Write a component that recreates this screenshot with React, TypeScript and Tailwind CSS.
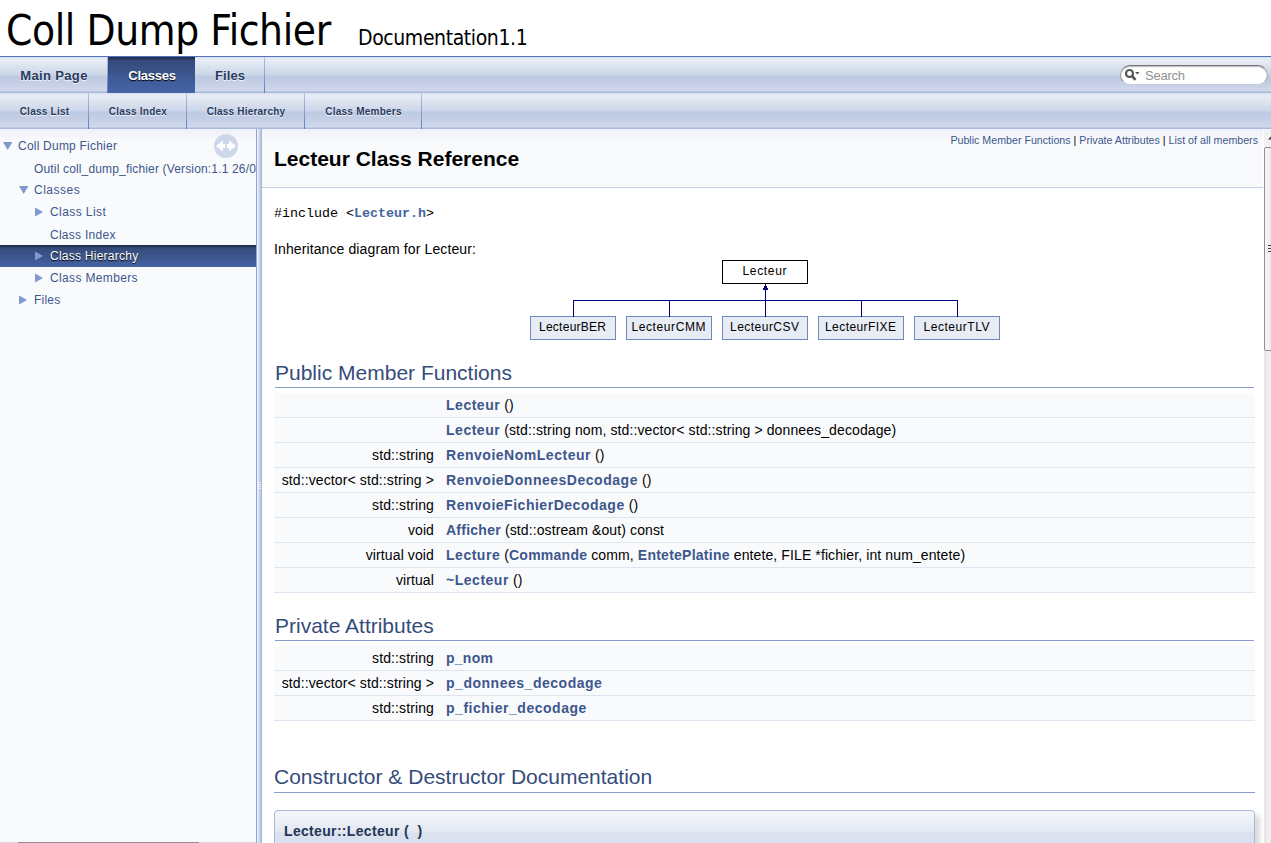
import React from "react";

type Tab = { label: string; width: string; tracking: string; active?: boolean };

const BAR =
  "bg-[linear-gradient(to_bottom,#dbe2f0_0px,#e8edf6_3px,#dce3f0_9px,#ccd6e9_18px,#bccae2_19px,#c5cfe6_27px,#d0d8ea_34px,#a9b8db_35px,#a9b8db_36px)]";

const mainTabs: Tab[] = [
  { label: "Main Page", width: "w-[108px]", tracking: "tracking-[0.35px]" },
  { label: "Classes", width: "w-[87px]", tracking: "tracking-[-0.25px]", active: true },
  { label: "Files", width: "w-[70px]", tracking: "tracking-[0.1px]" },
];

const subTabs: Tab[] = [
  { label: "Class List", width: "w-[89px]", tracking: "tracking-[0.25px]" },
  { label: "Class Index", width: "w-[98px]", tracking: "tracking-[0.25px]" },
  { label: "Class Hierarchy", width: "w-[118px]", tracking: "tracking-[0.2px]" },
  { label: "Class Members", width: "w-[117px]", tracking: "tracking-[0.25px]" },
];

function Separator() {
  return <div className="h-[36px] w-px shrink-0 bg-linear-to-b from-[#b4c3e0] to-[#5f7dba]" />;
}

function TabBar({ tabs, small }: { tabs: Tab[]; small?: boolean }) {
  return (
    <div className="flex">
      {tabs.map((t) => (
        <div key={t.label} className={`flex h-[36px] ${t.width}`}>
          <div
            className={`flex grow items-center justify-center font-bold whitespace-nowrap ${t.tracking} ${
              small ? "pl-px text-[10px]" : "pt-[2px] pl-px text-[13px]"
            } ${
              t.active
                ? "bg-[linear-gradient(to_bottom,#1d2b4b_0px,#344b7c_4px,#3a5388_14px,#3d5a96_20px,#4665a5_36px)] text-white [text-shadow:0_1px_1px_#000]"
                : "text-[#283a5d] [text-shadow:0_1px_1px_rgba(255,255,255,0.9)]"
            }`}
          >
            {t.label}
          </div>
          {!t.active && <Separator />}
        </div>
      ))}
    </div>
  );
}

function SearchBox() {
  return (
    <div className="mr-[3px] flex h-[20px] w-[148px] items-center rounded-full border border-t-[#777] border-r-[#aaa] border-b-[#c9cfda] border-l-[#999] bg-white pl-[4px] shadow-[inset_0_1px_1px_#bbb]">
      <svg width="16" height="14" viewBox="0 0 16 14" className="shrink-0">
        <circle cx="4.5" cy="5.5" r="3.5" fill="none" stroke="#555" strokeWidth="2.2" />
        <path d="M7 8 10.5 11.8" stroke="#555" strokeWidth="2.6" />
        <path d="M10 4h4.6l-2.3 2.6z" fill="#555" />
      </svg>
      <span className="ml-[4px] pt-[2px] text-[13px] tracking-[-0.25px] text-[#909090]">Search</span>
    </div>
  );
}

type Node = { label: string; pad: string; tracking: string; arrow: "down" | "right" | "none"; selected?: boolean };

const nodes: Node[] = [
  { label: "Coll Dump Fichier", pad: "pl-0", tracking: "tracking-[0.22px]", arrow: "down" },
  { label: "Outil coll_dump_fichier (Version:1.1 26/08/2013)", pad: "pl-[16px]", tracking: "tracking-[0.16px]", arrow: "none" },
  { label: "Classes", pad: "pl-[16px]", tracking: "tracking-[0.5px]", arrow: "down" },
  { label: "Class List", pad: "pl-[32px]", tracking: "tracking-[0.42px]", arrow: "right" },
  { label: "Class Index", pad: "pl-[32px]", tracking: "tracking-[0.27px]", arrow: "none" },
  { label: "Class Hierarchy", pad: "pl-[32px]", tracking: "tracking-[0.25px]", arrow: "right", selected: true },
  { label: "Class Members", pad: "pl-[32px]", tracking: "tracking-[0.35px]", arrow: "right" },
  { label: "Files", pad: "pl-[16px]", tracking: "tracking-[0.22px]", arrow: "right" },
];

function Arrow({ kind }: { kind: Node["arrow"] }) {
  return (
    <svg width="18" height="22" viewBox="0 0 18 22" className="shrink-0">
      {kind === "down" && <path d="M3 7h9.4l-4.7 8z" fill="#8199cc" />}
      {kind === "right" && <path d="M3 6.5v9l8-4.5z" fill="#8199cc" />}
    </svg>
  );
}

function SideNav() {
  return (
    <nav className="relative w-[256px] shrink-0 overflow-hidden bg-[linear-gradient(to_bottom,#eef1f8_0px,#f9fafc_12px)] pt-[6px]">
      {nodes.map((n) => (
        <div
          key={n.label}
          className={`flex h-[22px] items-center text-[12px] whitespace-nowrap ${n.tracking} ${n.pad} ${
            n.selected
              ? "bg-[linear-gradient(to_bottom,#1d2b4b_0px,#364d7c_4px,#3c568d_12px,#4464a3_22px)] text-white [text-shadow:0_1px_1px_#000]"
              : "text-[#3d578c]"
          }`}
        >
          <Arrow kind={n.arrow} />
          <span className={n.arrow === "none" ? "pt-px" : ""}>{n.label}</span>
        </div>
      ))}
      <svg width="24" height="24" viewBox="0 0 24 24" className="absolute top-[5px] left-[214px]">
        <circle cx="12" cy="12" r="12" fill="#ced7ea" />
        <path d="M2 12l7-5.5v3.5h2.2v4H9v3.5zM22 12l-7-5.5v3.5h-2.2v4H15v3.5z" fill="#fff" />
      </svg>
      <div className="absolute bottom-0 left-0 h-px w-full bg-[#dcdcdc]">
        <div className="ml-[18px] h-px w-[181px] bg-[#8e8e8e]" />
      </div>
    </nav>
  );
}

function Splitter() {
  return (
    <div className="flex w-[6px] shrink-0 items-center bg-[linear-gradient(to_right,#8fa5d2_0px,#8fa5d2_1px,#f4f6fb_1px,#e3e8f3_2px,#c5cfe5_4px,#9aaed6_6px)]">
      <svg width="6" height="8" viewBox="0 0 6 8">
        {[0, 2, 4, 6].map((y) => (
          <path key={y} d={`M2 ${y + 0.5}h1M4 ${y + 0.5}h1`} stroke="#fff" />
        ))}
      </svg>
    </div>
  );
}

const children = [
  { name: "LecteurBER", x: 0, w: 67 },
  { name: "LecteurCMM", x: 96, w: 74 },
  { name: "LecteurCSV", x: 192, w: 69 },
  { name: "LecteurFIXE", x: 288, w: 71 },
  { name: "LecteurTLV", x: 384, w: 66 },
];

function Diagram() {
  return (
    <svg width="470" height="80" viewBox="0 0 470 80" className="ml-[256px] block text-[12px]" shapeRendering="crispEdges">
      <rect x="192.5" y="0.5" width="85" height="23" fill="#fff" stroke="#000" />
      <text x="234.5" y="15" textAnchor="middle" textLength="44" fill="#000">Lecteur</text>
      {children.map((c) => (
        <g key={c.name}>
          <rect x={c.x + 0.5} y="56.5" width="85" height="23" fill="#e8ecf5" stroke="#7088c0" />
          <path d={`M${c.x + 43.5} 40v17`} stroke="#00007f" />
          <text x={c.x + 42.5} y="71" textAnchor="middle" textLength={c.w} fill="#000">{c.name}</text>
        </g>
      ))}
      <path d="M43 40.5h385M235.5 24v17" stroke="#00007f" />
      <path d="M235 25h1v1h1v2h1v2h-5v-2h1v-2h1z" fill="#00007f" />
    </svg>
  );
}

function L({ children, tight }: { children: React.ReactNode; tight?: boolean }) {
  return (
    <b className={`font-bold text-[#3d578c] ${tight ? "tracking-[0.25px]" : "tracking-[0.52px]"}`}>{children}</b>
  );
}

type Member = { type: string; body: React.ReactNode };

const functions: Member[] = [
  { type: "", body: <><L>Lecteur</L> ()</> },
  { type: "", body: <><L>Lecteur</L> (std::string nom, std::vector&lt; std::string &gt; donnees_decodage)</> },
  { type: "std::string", body: <><L>RenvoieNomLecteur</L> ()</> },
  { type: "std::vector< std::string >", body: <><L>RenvoieDonneesDecodage</L> ()</> },
  { type: "std::string", body: <><L>RenvoieFichierDecodage</L> ()</> },
  { type: "void", body: <><L tight>Afficher</L> (std::ostream &amp;out) const</> },
  {
    type: "virtual void",
    body: <><L>Lecture</L> (<L tight>Commande</L> comm, <L tight>EntetePlatine</L> entete, FILE *fichier, int num_entete)</>,
  },
  { type: "virtual", body: <><L>~Lecteur</L> ()</> },
];

const attributes: Member[] = [
  { type: "std::string", body: <L tight>p_nom</L> },
  { type: "std::vector< std::string >", body: <L>p_donnees_decodage</L> },
  { type: "std::string", body: <L>p_fichier_decodage</L> },
];

function Members({ title, rows }: { title: string; rows: Member[] }) {
  return (
    <section className="w-[981px]">
      <h2 className="mr-px ml-px flex h-[29px] items-center border-b border-[#879ecb] text-[21px] text-[#354c7b]">{title}</h2>
      <div className="pt-[5px]">
        {rows.map((r, i) => (
          <div key={i} className="flex h-[25px] items-center border-b border-[#dee4f0] bg-[#f9fafc] text-[14px] tracking-[0.11px] whitespace-nowrap text-black">
            <div className="w-[160px] text-right">{r.type}</div>
            <div className="ml-[12px]">{r.body}</div>
          </div>
        ))}
      </div>
    </section>
  );
}

function Scrollbar() {
  return (
    <div className="w-[8px] shrink-0 overflow-hidden border-l border-white bg-[linear-gradient(to_right,#e3e3e3,#eeeeee_3px)]">
      <div className="flex h-[18px] items-center bg-[#f1f1f1]">
        <svg width="7" height="6" viewBox="0 0 7 6">
          <path d="M4 4.5 7.5 1v3.5z" fill="#333" />
        </svg>
      </div>
      <div className="flex h-[204px] w-[15px] items-center rounded-[2px] border border-[#8f8f8f] bg-linear-to-r from-[#f6f6f6] to-[#dedede]">
        <svg width="7" height="8" viewBox="0 0 7 8" className="ml-[3px]">
          <path d="M0 .5h7M0 3.5h7M0 6.5h7" stroke="#444" />
        </svg>
      </div>
    </div>
  );
}

export default function App() {
  return (
    <div className="flex h-[843px] w-[1271px] flex-col overflow-hidden bg-white font-['Liberation_Sans',Arial,sans-serif] text-black">
      <header className="flex h-[57px] items-baseline border-b border-[#5373b4] pl-[6px] font-['DejaVu_Sans_Condensed','DejaVu_Sans',sans-serif] font-stretch-condensed whitespace-nowrap">
        <span className="w-[352px] text-[42px] leading-[61px] tracking-[-0.4px]">Coll Dump Fichier</span>
        <span className="text-[21px] tracking-[-0.4px]">Documentation1.1</span>
      </header>
      <div className={`flex h-[36px] shrink-0 items-center justify-between ${BAR}`}>
        <TabBar tabs={mainTabs} />
        <SearchBox />
      </div>
      <div className={`h-[36px] shrink-0 ${BAR}`}>
        <TabBar tabs={subTabs} small />
      </div>
      <div className="flex min-h-0 grow">
        <SideNav />
        <Splitter />
        <main className="min-w-0 grow overflow-hidden">
          <div className="flex h-[59px] justify-between border-b border-[#c4cfe5] bg-[linear-gradient(to_bottom,#eef1f8_0px,#f9fafc_12px)] pr-[5px] pl-[12px]">
            <h1 className="pt-[14px] text-[21px] leading-[32px] font-bold">Lecteur Class Reference</h1>
            <div className="pt-[4px] text-[10.67px] leading-[15px] whitespace-nowrap text-[#3d578c]">
              Public Member Functions <span className="text-black">|</span> Private Attributes <span className="text-black">|</span> List of all members
            </div>
          </div>
          <div className="pl-[12px]">
            <div className="mt-[16px] h-[20px] font-['Liberation_Mono','Courier_New',monospace] text-[13.33px] leading-[20px]">
              #include &lt;<span className="font-bold text-[#4665a2]">Lecteur.h</span>&gt;
            </div>
            <p className="mt-[15px] h-[21px] text-[14px] leading-[21px] tracking-[0.11px]">Inheritance diagram for Lecteur:</p>
            <Diagram />
            <div className="mt-[19px]">
              <Members title="Public Member Functions" rows={functions} />
            </div>
            <div className="mt-[19px]">
              <Members title="Private Attributes" rows={attributes} />
            </div>
            <h2 className="mt-[43px] flex h-[29px] w-[981px] items-center border-b border-[#879ecb] pb-[2px] text-[21px] text-[#354c7b]">
              Constructor &amp; Destructor Documentation
            </h2>
            <div className="mt-[17px] h-[60px] w-[981px] rounded-t-[4px] border border-[#a8b8d9] bg-[linear-gradient(to_bottom,#f5f7fb_0px,#e2e8f2_21px,#d9e0ee_22px,#dfe5f1_60px)] pt-[10px] pl-[9px] text-[14px] leading-[20px] font-bold tracking-[0.33px] whitespace-pre text-[#253555] shadow-[5px_5px_5px_rgba(0,0,0,0.15)]">
              Lecteur::Lecteur (  )
            </div>
          </div>
        </main>
        <Scrollbar />
      </div>
    </div>
  );
}
